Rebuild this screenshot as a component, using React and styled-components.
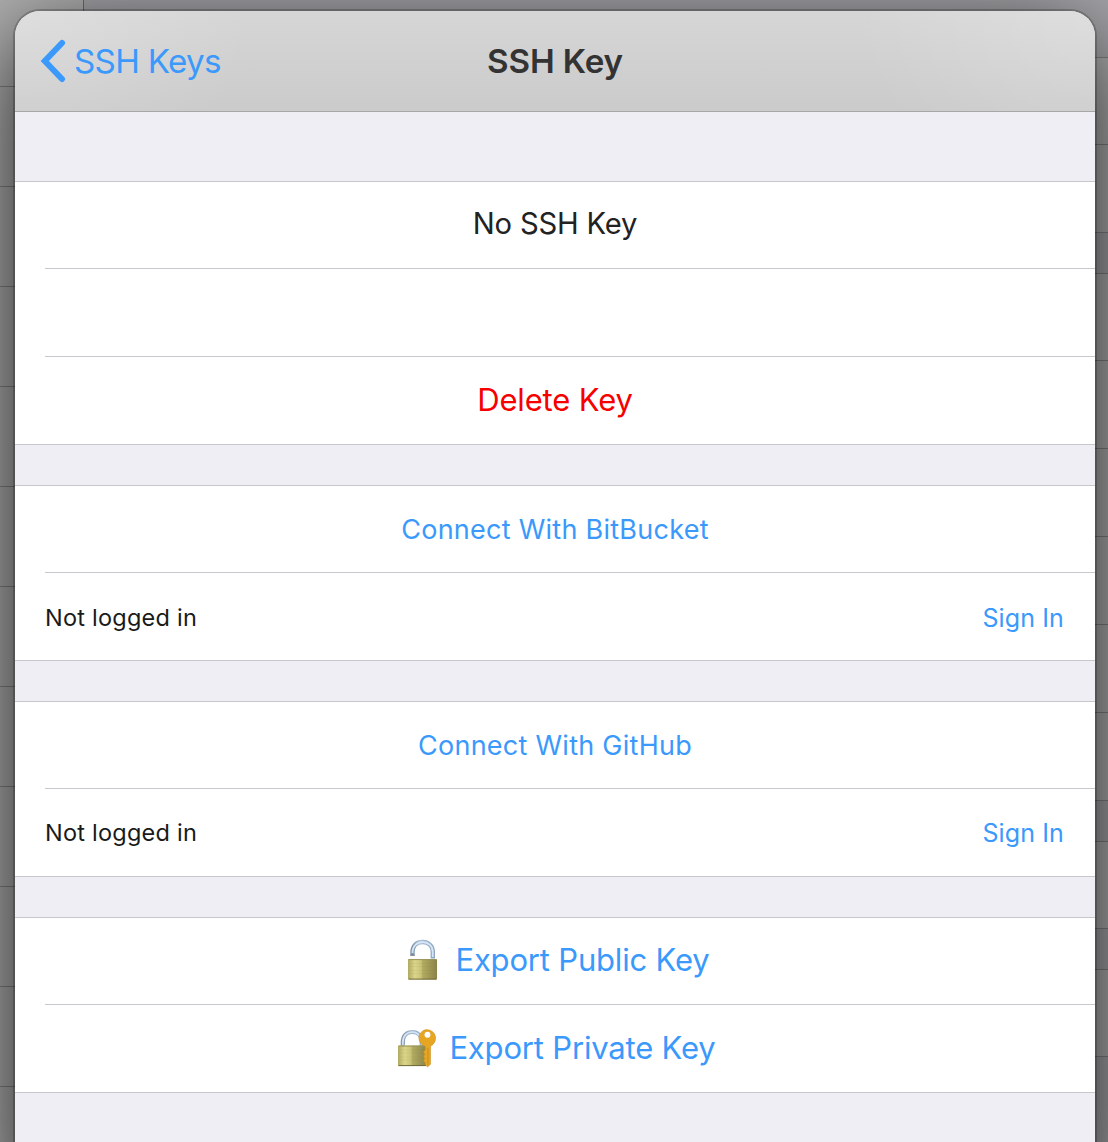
import React from "react";
import styled, { createGlobalStyle } from "styled-components";

const GlobalStyle = createGlobalStyle`
  *, *::before, *::after { box-sizing: border-box; }
  html, body { margin: 0; padding: 0; overflow: hidden; }
  body { font-family: Inter, "Liberation Sans", sans-serif; }
`;

const BLUE = "#3b99fc";
const LINE = "#c8c7cc";

const Screen = styled.div`
  position: relative;
  width: 1108px;
  height: 1142px;
  overflow: hidden;
  display: flex;
  background: #a5a5a5;
`;

const Sidebar = styled.div`
  flex: 0 0 84px;
  display: flex;
  flex-direction: column;
  border-right: 1px solid #6c6c6e;
  background: #b2b2b2;
`;

const Detail = styled.div`
  flex: 1;
  display: flex;
  flex-direction: column;
`;

const BackRow = styled.div`
  flex: 0 0 ${(p) => p.$h}px;
  border-bottom: 1px solid #838385;
  background: ${(p) => (p.$gap ? "#a6a6aa" : "#b0b0b0")};
`;

const Sheet = styled.main`
  position: absolute;
  left: 15px;
  top: 11px;
  width: 1080px;
  height: 1180px;
  display: flex;
  flex-direction: column;
  overflow: hidden;
  border-radius: 25px;
  background: #efeef4;
  box-shadow: 0 0 0 2px rgba(0, 0, 0, 0.2), 0 24px 90px rgba(0, 0, 0, 0.84);
`;

const Header = styled.header`
  flex: 0 0 101px;
  display: grid;
  grid-template-columns: 1fr auto 1fr;
  align-items: center;
  padding: 0 25px;
  border-bottom: 1px solid #a7a7aa;
  background:
    radial-gradient(240px 190px at 0 0, rgba(255, 255, 255, 0.2), rgba(255, 255, 255, 0)),
    radial-gradient(240px 190px at 100% 0, rgba(255, 255, 255, 0.2), rgba(255, 255, 255, 0)),
    linear-gradient(#d6d6d6, #cbcbcb);
`;

const BackButton = styled.a`
  display: flex;
  align-items: center;
  gap: 8px;
  color: ${BLUE};
`;

const Label = styled.span`
  display: block;
  white-space: nowrap;
  font-size: ${(p) => p.$size}px;
  font-weight: ${(p) => p.$weight || 400};
  letter-spacing: ${(p) => p.$track || 0}px;
  line-height: 40px;
  color: ${(p) => p.$color || BLUE};
`;

const Section = styled.section`
  flex: none;
  margin-top: ${(p) => p.$gap || 40}px;
  border-top: 1px solid ${LINE};
  border-bottom: 1px solid ${LINE};
  background: #fff;
`;

const Row = styled.div`
  height: ${(p) => p.$h || 87}px;
  margin-left: 30px;
  padding: ${(p) => p.$drop || 0}px ${(p) => (p.$split ? 31 : 30)}px ${(p) => p.$lift || 0}px ${(p) => p.$indent || 0}px;
  display: flex;
  align-items: center;
  justify-content: ${(p) => (p.$split ? "space-between" : "center")};
  gap: ${(p) => p.$gap || 0}px;
  & + & { border-top: 1px solid ${LINE}; }
`;

const Defs = () => (
  <defs>
    <linearGradient id="brass" x1="0" x2="1" y1="0" y2="0">
      <stop offset="0" stopColor="#b0ab62" />
      <stop offset=".24" stopColor="#dcd68a" />
      <stop offset=".46" stopColor="#c8c276" />
      <stop offset=".5" stopColor="#b2ac62" />
      <stop offset="1" stopColor="#8a8348" />
    </linearGradient>
    <linearGradient id="steel" x1="0" x2="1" y1="0" y2="0">
      <stop offset="0" stopColor="#8397aa" />
      <stop offset=".4" stopColor="#a9bed5" />
      <stop offset="1" stopColor="#8da6c0" />
    </linearGradient>
  </defs>
);

const Brass = ({ x, y, w, h }) => (
  <g>
    <rect x={x} y={y} width={w} height={h} rx="1" fill="url(#brass)" />
    {[4.5, 7.5, 11.5, 14.5].map((d) => (
      <path key={d} d={`M${x + 1} ${y + d}h${w - 2}`} stroke="#7c763e" strokeOpacity=".12" strokeWidth=".7" />
    ))}
    <path d={`M${x + 0.5} ${y + 0.6}h${w - 1}`} stroke="#9a955c" strokeWidth="1" />
    <path d={`M${x + 0.5} ${y + h - 0.5}h${w - 1}`} stroke="#6f6939" strokeWidth="1" />
  </g>
);

const OpenLock = () => (
  <svg width="34" height="42" viewBox="0 0 34 42">
    <Defs />
    <path d="M6.500 16.500v-3C6.500 6.500 10.800 3 16.600 3S26.800 7 26.800 13v6.500" fill="none" stroke="url(#steel)" strokeWidth="4.400" />
    <path d="M6.500 14C6.500 6.800 11 3 16.600 3s10.200 4 10.200 10v5" fill="none" stroke="#d6e5f6" strokeWidth="1.800" />
    <path d="M4.300 16.200h4.500" stroke="#6f7884" strokeWidth="1" />
    <Brass x={2} y={20} w={29} h={20.6} />
  </svg>
);

const KeyLock = () => (
  <svg width="40" height="40" viewBox="0 0 40 40">
    <path d="M5.800 18v-3.500C5.800 7.500 9.800 4 15.300 4s9.500 4 9.500 10.500v4" fill="none" stroke="url(#steel)" strokeWidth="4.200" />
    <path d="M5.800 17v-2.500C5.800 7.500 10 4 15.300 4s9.500 4 9.500 10.500V17" fill="none" stroke="#d6e5f6" strokeWidth="1.700" />
    <Brass x={1} y={17.5} w={28.5} h={20.6} />
    <path
      fillRule="evenodd"
      d="M30.300 1.700a8.500 8.500 0 0 1 3.200 16.300v18.300l-2.900 2.600-2.400-2.200v-2.200l-1.400-1v-1.900l1.400-1-1.400-1.200v-2l1.400-1-1.400-1.200v-2l1.400-1v-4a8.500 8.500 0 0 1 2.100-16.700zm.2 2.100a2.900 2.900 0 1 0 0 5.800 2.900 2.900 0 0 0 0-5.800z"
      fill="#e6a622"
      stroke="#cf9020"
      strokeWidth=".6"
    />
    <path d="M31 20v17" stroke="#c98d1b" strokeWidth="1" />
    <circle cx="30.500" cy="6.700" r="2.900" fill="#fff" />
  </svg>
);

const RIGHT_ROWS = [
  [58], [87], [88], [41, true], [87], [88], [88], [88], [88], [88], [41, true], [87], [41, true], [87], [86, true],
];

export default function App() {
  return (
    <>
      <GlobalStyle />
      <Screen>
        <Sidebar>
          <BackRow $h={87} />
          {Array.from({ length: 11 }, (_, i) => <BackRow key={i} $h={100} />)}
        </Sidebar>
        <Detail>
          {RIGHT_ROWS.map(([h, gap], i) => <BackRow key={i} $h={h} $gap={gap || i === 0} />)}
        </Detail>
        <Sheet>
          <Header>
            <BackButton>
              <svg width="26" height="44" viewBox="0 0 26 44">
                <path d="M22 4 4.800 22 22 40" fill="none" stroke={BLUE} strokeWidth="6" strokeLinecap="round" />
              </svg>
              <Label $size={33.2} $track={-0.7}>SSH Keys</Label>
            </BackButton>
            <Label $size={33.2} $weight={600} $track={-0.15} $color="#333">SSH Key</Label>
            <span />
          </Header>

          <Section $gap={69}>
            <Row $h={86} $lift={2}><Label $size={29.2} $track={-0.2} $color="#222">No SSH Key</Label></Row>
            <Row $h={88} />
            <Row $h={88} $lift={2}><Label $size={31} $track={-0.15} $color="#f60000">Delete Key</Label></Row>
          </Section>

          <Section>
            <Row $h={86} $drop={2}><Label $size={27} $track={0.26}>Connect With BitBucket</Label></Row>
            <Row $h={88} $split $drop={2}>
              <Label $size={23.5} $track={0.24} $color="#1a1a1a">Not logged in</Label>
              <Label $size={25} $track={0.12}>Sign In</Label>
            </Row>
          </Section>

          <Section>
            <Row $h={86} $drop={2}><Label $size={27} $track={0.26}>Connect With GitHub</Label></Row>
            <Row $h={88} $split>
              <Label $size={23.5} $track={0.24} $color="#1a1a1a">Not logged in</Label>
              <Label $size={25} $track={0.12}>Sign In</Label>
            </Row>
          </Section>

          <Section>
            <Row $h={86} $gap={15} $lift={2} $indent={6}><OpenLock /><Label $size={31} $track={-0.18}>Export Public Key</Label></Row>
            <Row $h={88} $gap={12} $lift={2} $indent={3}><KeyLock /><Label $size={31} $track={-0.18}>Export Private Key</Label></Row>
          </Section>
        </Sheet>
      </Screen>
    </>
  );
}
